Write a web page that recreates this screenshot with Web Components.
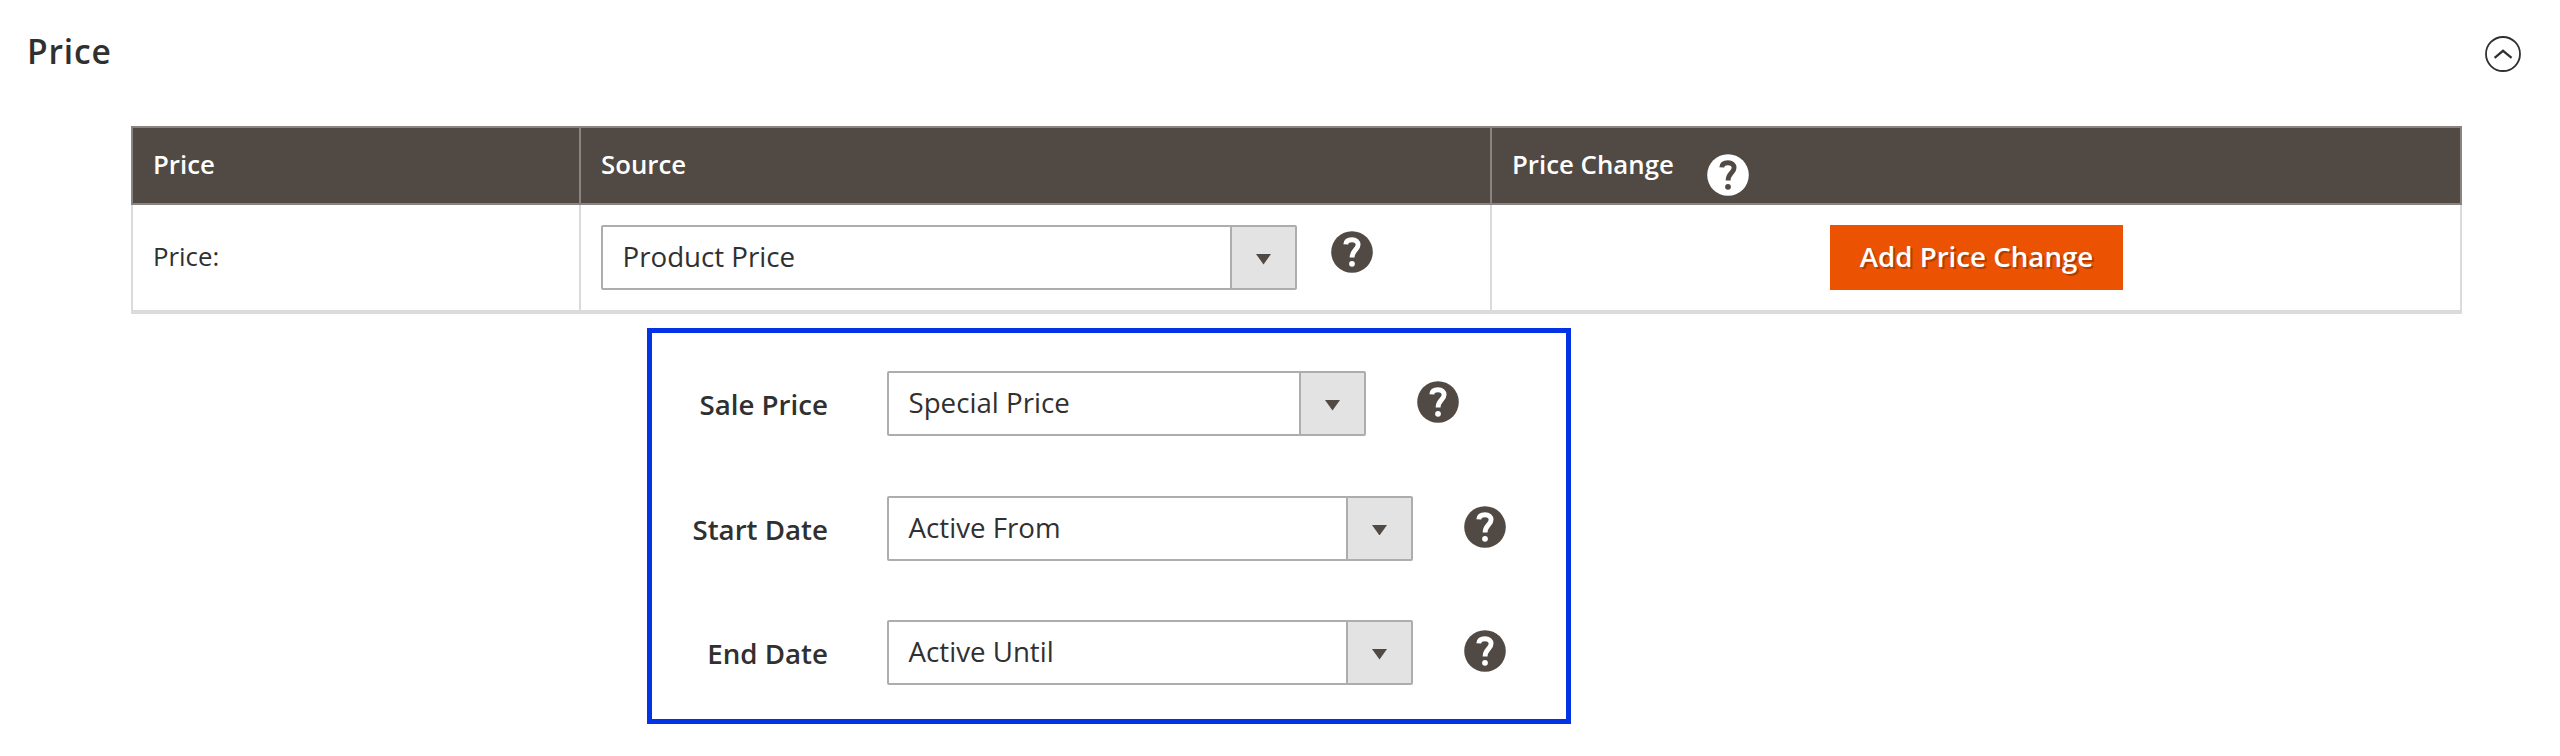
<!DOCTYPE html>
<html lang="en">
<head>
<meta charset="utf-8">
<title>Price</title>
<style>
html { background: #fff; }
body { margin: 0; font-family: "Open Sans", "Noto Sans", sans-serif; color: #303030; }
</style>
</head>
<body>
<price-section></price-section>

<script>
const define = (name, html) => {
  const template = document.createElement('template');
  template.innerHTML = html;
  customElements.define(name, class extends HTMLElement {
    constructor() {
      super();
      this.attachShadow({ mode: 'open' }).append(template.content.cloneNode(true));
    }
  });
};

define('help-tip', `
  <style>
    :host { display: block; width: 42px; height: 42px; color: #514943; --mark: #fff; }
    :host([light]) { color: #fff; --mark: #514943; }
    svg { display: block; overflow: visible; }
  </style>
  <svg width="42" height="42" viewBox="0 0 42 42">
    <circle cx="21" cy="21" r="20.8" fill="currentColor"/>
    <path d="M14.8 13.4C15 10.3 17.4 8.7 21 8.7C24.8 8.7 27.1 10.7 27.1 13.7C27.1 16.2 25.8 17.4 24 19.4C22.1 21.5 21.1 22.9 21.1 26.6" fill="none" stroke="var(--mark)" stroke-width="4.9"/>
    <circle cx="21" cy="32.8" r="2.9" fill="var(--mark)"/>
  </svg>`);

define('collapse-button', `
  <style>:host { display: block; width: 36px; height: 36px; } svg { display: block; }</style>
  <svg width="36" height="36" viewBox="0 0 36 36" fill="none" stroke="#303030">
    <circle cx="18" cy="18" r="17" stroke-width="1.8"/>
    <path d="M9.6 21.8L18 14.8L26.6 21.8" stroke-width="2.2"/>
  </svg>`);

define('select-box', `
  <style>
    :host { display: flex; box-sizing: border-box; height: 65px; border: 2px solid #adadad; border-radius: 2px;
      background: #fff; font-size: 27.7px; line-height: 59px; }
    .value { flex: 1; padding-left: 19.5px; white-space: nowrap; }
    .arrow { box-sizing: border-box; width: 65px; border-left: 2px solid #adadad; background: #e3e3e3;
      display: flex; align-items: center; justify-content: center; }
    svg { display: block; margin-top: 4px; }
  </style>
  <div class="value"><slot></slot></div>
  <div class="arrow"><svg width="15" height="10.5" viewBox="0 0 15 10.5"><path d="M0 0H15L7.5 10.5Z" fill="#514943"/></svg></div>`);

define('action-button', `
  <style>
    :host { display: block; box-sizing: border-box; width: 293px; height: 65px; background: #eb5202; color: #fff;
      font-size: 27.7px; font-weight: 600; line-height: 63px; text-align: center; white-space: nowrap;
      text-shadow: 2px 2px 0 rgba(0,0,0,.25); }
  </style><slot></slot>`);

define('price-table', `
  <style>
    :host { display: block; width: 2331px; }
    .row { display: grid; grid-template-columns: 448px 911px 972px; }
    .row > div { box-sizing: border-box; display: flex; padding-left: 20px; white-space: nowrap;
      font-size: 25.8px; border-left: 2px solid var(--line); }
    .row > div:last-child { border-right: 2px solid var(--line); }
    .head { --line: #8a837f; background: #514943; color: #fff; font-weight: 600; line-height: 73px;
      border-top: 2px solid #8a837f; border-bottom: 2px solid #8a837f; height: 75px; }
    .body { --line: #dadcdc; border-bottom: 4px solid #dadcdc; height: 105px; line-height: 102px; }
    .head help-tip { margin: 26px 0 0 33px; }
    select-box { width: 696px; margin-top: 20px; }
    .body help-tip { margin: 26px 0 0 34px; }
    .body .action { padding-left: 338px; }
    action-button { margin-top: 20px; }
  </style>
  <div class="row head">
    <div>Price</div><div>Source</div><div>Price Change<help-tip light></help-tip></div>
  </div>
  <div class="row body">
    <div>Price:</div>
    <div><select-box>Product Price</select-box><help-tip></help-tip></div>
    <div class="action"><action-button>Add Price Change</action-button></div>
  </div>`);

define('field-row', `
  <style>
    :host { display: flex; height: 65px; }
    .label { width: 176px; font-size: 27.7px; font-weight: 600; line-height: 67px; text-align: right; white-space: nowrap; }
    ::slotted(select-box) { margin-left: 59px; width: var(--select, 526px); }
    help-tip { margin: 10px 0 0 51px; }
  </style>
  <div class="label"><slot name="label"></slot></div><slot></slot><help-tip></help-tip>`);

define('sale-panel', `
  <style>
    :host { display: flex; flex-direction: column; gap: 59.5px; box-sizing: border-box; width: 924px; height: 396px;
      border: 5px solid #0433e6; padding-top: 38px; }
  </style><slot></slot>`);

define('price-section', `
  <style>
    :host { display: block; width: 2560px; height: 756px; overflow: hidden; }
    header { display: flex; justify-content: space-between; height: 126px; padding: 0 39px 0 27px; box-sizing: border-box; }
    h2 { margin: 28px 0 0; font-size: 33.6px; font-weight: 600; letter-spacing: .025em; line-height: 46px; height: 46px; }
    collapse-button { margin-top: 36px; }
    price-table { margin-left: 131px; }
    sale-panel { margin: 14px 0 0 647px; }
  </style>
  <header><h2>Price</h2><collapse-button></collapse-button></header>
  <price-table></price-table>
  <sale-panel>
    <field-row style="--select:479px"><span slot="label">Sale Price</span><select-box>Special Price</select-box></field-row>
    <field-row><span slot="label">Start Date</span><select-box>Active From</select-box></field-row>
    <field-row><span slot="label">End Date</span><select-box>Active Until</select-box></field-row>
  </sale-panel>`);
</script>
</body>
</html>
